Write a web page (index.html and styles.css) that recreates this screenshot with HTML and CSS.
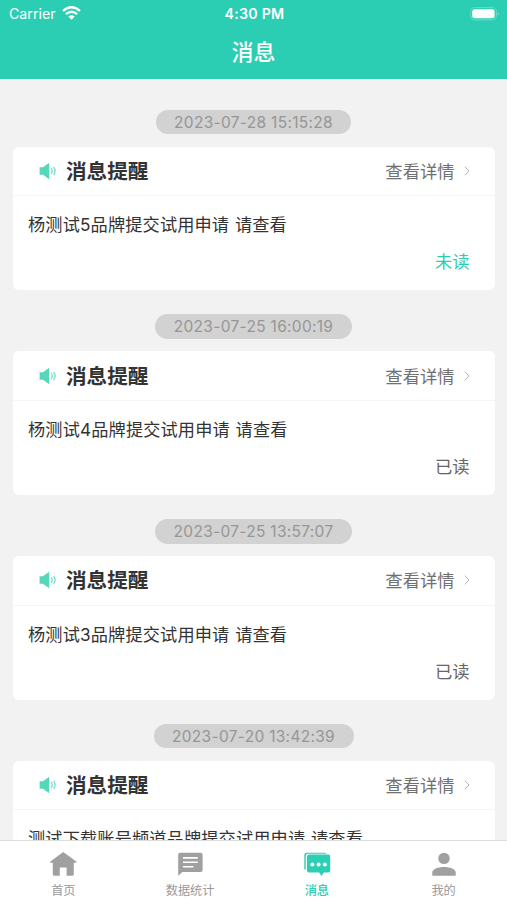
FILE: index.html
```html
<!DOCTYPE html>
<html lang="zh-CN">
<head>
<meta charset="utf-8">
<meta name="viewport" content="width=device-width, initial-scale=1">
<title>消息</title>
<link rel="stylesheet" href="styles.css">
</head>
<body>
<svg class="defs" aria-hidden="true">
  <symbol id="speaker" viewBox="0 0 18 18">
    <path d="M.6 5.200H4L10.200.8v16.400L4 12.800H.6z" fill="#55d8b9"/>
    <path d="M12.200 6q2 3 0 6M14.600 5q3 4 0 8" fill="none" stroke="#79dfc8" stroke-width="1.300"/>
  </symbol>
  <symbol id="chevron" viewBox="0 0 6 10">
    <path d="M.8.7 5 5 .8 9.300" fill="none" stroke="#b5b5b5" stroke-width="1"/>
  </symbol>
</svg>
<div class="app">
  <header class="header">
    <div class="status">
      <div class="carrier"><span>Carrier</span>
        <svg class="wifi" viewBox="0 0 19 14"><path d="M1 5Q9.500-2.400 18 5M3.900 8.200Q9.500 3.300 15.100 8.200" fill="none" stroke="#fff" stroke-width="2.300"/><path d="M6.300 10.500Q9.500 7.800 12.700 10.500L9.500 13.800z" fill="#fff"/></svg>
      </div>
      <div class="time">4:30 PM</div>
      <svg class="battery" viewBox="0 0 30 14"><rect x=".6" y=".6" width="25.800" height="12.300" rx="4" fill="none" stroke="#6bdcc6" stroke-width="1"/><rect x="2.200" y="2.300" width="22.400" height="9" rx="2.400" fill="#fff"/><path d="M27.800 4.600q2.200 2.100 0 4.200z" fill="#6bdcc6"/></svg>
    </div>
    <h1 class="title">消息</h1>
  </header>
  <main class="list">
    <section class="message">
      <time class="date">2023-07-28 15:15:28</time>
      <article class="card">
        <div class="card-head"><svg class="speaker"><use href="#speaker"/></svg><h2>消息提醒</h2><span class="detail">查看详情</span><svg class="chevron"><use href="#chevron"/></svg></div>
        <p class="text">杨测试5品牌提交试用申请 请查看</p>
        <p class="state unread">未读</p>
      </article>
    </section>
    <section class="message">
      <time class="date">2023-07-25 16:00:19</time>
      <article class="card">
        <div class="card-head"><svg class="speaker"><use href="#speaker"/></svg><h2>消息提醒</h2><span class="detail">查看详情</span><svg class="chevron"><use href="#chevron"/></svg></div>
        <p class="text">杨测试4品牌提交试用申请 请查看</p>
        <p class="state">已读</p>
      </article>
    </section>
    <section class="message">
      <time class="date">2023-07-25 13:57:07</time>
      <article class="card">
        <div class="card-head"><svg class="speaker"><use href="#speaker"/></svg><h2>消息提醒</h2><span class="detail">查看详情</span><svg class="chevron"><use href="#chevron"/></svg></div>
        <p class="text">杨测试3品牌提交试用申请 请查看</p>
        <p class="state">已读</p>
      </article>
    </section>
    <section class="message">
      <time class="date">2023-07-20 13:42:39</time>
      <article class="card">
        <div class="card-head"><svg class="speaker"><use href="#speaker"/></svg><h2>消息提醒</h2><span class="detail">查看详情</span><svg class="chevron"><use href="#chevron"/></svg></div>
        <p class="text">测试下载账号频道品牌提交试用申请 请查看</p>
      </article>
    </section>
  </main>
  <nav class="tabs">
    <a class="tab"><svg viewBox="0 0 28 26"><path d="M14.200 1 1 10.800l.4.900h2.400v11.500q0 1.600 1.600 1.600h5.400v-8.400h6.800v8.400h5.600q1.600 0 1.600-1.600V11.700h2.400l.4-.9z" fill="#a0a0a0"/></svg><span>首页</span></a>
    <a class="tab"><svg viewBox="0 0 28 26"><path d="M4.200 1.800h20.400q2 0 2 2v15.100q0 2-2 2H6.400L2.200 24.800V3.800q0-2 2-2z" fill="#a0a0a0"/><path d="M7 6.900h14.800M7 11.300h14.800M7 15.800h10.400" stroke="#fff" stroke-width="1.600"/></svg><span>数据统计</span></a>
    <a class="tab active"><svg viewBox="0 0 28 26"><path d="M1.300 18.500V4q0-2.300 2.300-2.300h18.200q1.500 0 1.700 1.100H5.200Q2.700 2.800 2.700 5.300v13.200z" fill="#2bcfb3"/><path d="M6 3.600h19.200q2 0 2 2v14q0 2-2 2h-4.400L18.500 25l-2.300-3.400H6q-2 0-2-2v-14q0-2 2-2z" fill="#2bcfb3"/><g fill="#fff"><circle cx="9.300" cy="13.600" r="2"/><circle cx="15.600" cy="13.600" r="2"/><circle cx="21.900" cy="13.600" r="2"/></g></svg><span>消息</span></a>
    <a class="tab"><svg viewBox="0 0 28 26"><circle cx="14" cy="7.400" r="5.700" fill="#a0a0a0"/><path d="M2.300 24.800v-3.300C2.300 18 8 15.900 14 15.900s11.700 2.100 11.700 5.600v3.300z" fill="#a0a0a0"/></svg><span>我的</span></a>
  </nav>
</div>
</body>
</html>
```
FILE: styles.css
```css
* { box-sizing: border-box; }
body, h1, h2, p { margin: 0; }
body {
  font-family: Inter, "Noto Sans CJK SC", sans-serif;
  background: #f2f2f2;
  color: #333;
}
.defs { position: absolute; width: 0; height: 0; }
.app { display: flex; flex-direction: column; height: 900px; overflow: hidden; }
.header { flex: none; height: 79px; background: #2bceb2; color: #fff; }
.status {
  display: grid;
  grid-template-columns: 1fr auto 1fr;
  align-items: center;
  height: 27px;
  padding: 0 7px 0 9px;
}
.carrier { display: flex; align-items: center; gap: 6px; font-size: 14.200px; }
.wifi { width: 19px; height: 14px; margin-top: -1px; }
.time { font-size: 14.200px; font-weight: 600; letter-spacing: .25px; }
.battery { width: 30px; height: 14px; justify-self: end; }
.title { font-size: 22px; font-weight: 500; line-height: 50px; text-align: center; }
.list { flex: 1; min-height: 0; overflow: hidden; padding: 30.500px 12.500px 0; }
.message { display: flex; flex-direction: column; align-items: center; height: 204.800px; }
.date {
  height: 24.500px;
  padding: 0 18.500px;
  border-radius: 13px;
  background: #d2d2d2;
  color: #969696;
  font-size: 15.500px;
  letter-spacing: .3px;
  line-height: 25px;
  white-space: nowrap;
}
.card { width: 100%; height: 143.500px; margin-top: 12.500px; border-radius: 6px; background: #fff; }
.card-head {
  display: flex;
  align-items: center;
  height: 49.500px;
  padding: 0 25px 0 26.500px;
  border-bottom: 1px solid #f5f5f5;
}
.speaker { width: 18px; height: 18px; }
.card-head h2 { margin-left: 9px; padding-top: 2px; font-size: 20.600px; font-weight: 600; line-height: 30px; }
.detail { margin: -1px 0 0 auto; color: #707070; font-size: 17.300px; }
.chevron { width: 6px; height: 10px; margin-left: 9px; }
.text { padding: 16px 15.500px 0; font-size: 17.200px; letter-spacing: .14px; word-spacing: .8px; line-height: 26px; white-space: nowrap; }
.state { padding: 11px 25px 0; color: #666; font-size: 17.300px; line-height: 26px; text-align: right; }
.unread { color: #2bceb2; }
.tabs {
  flex: none;
  display: grid;
  grid-template-columns: repeat(4, 1fr);
  height: 60px;
  border-top: 1px solid #ddd;
  background: #fff;
}
.tab {
  display: flex;
  flex-direction: column;
  align-items: center;
  padding-top: 10px;
  color: #999;
  font-size: 12.200px;
  line-height: 18px;
}
.tab svg { width: 28px; height: 26px; margin-bottom: 5px; }
.active { color: #2bceb2; font-weight: 500; }
```
